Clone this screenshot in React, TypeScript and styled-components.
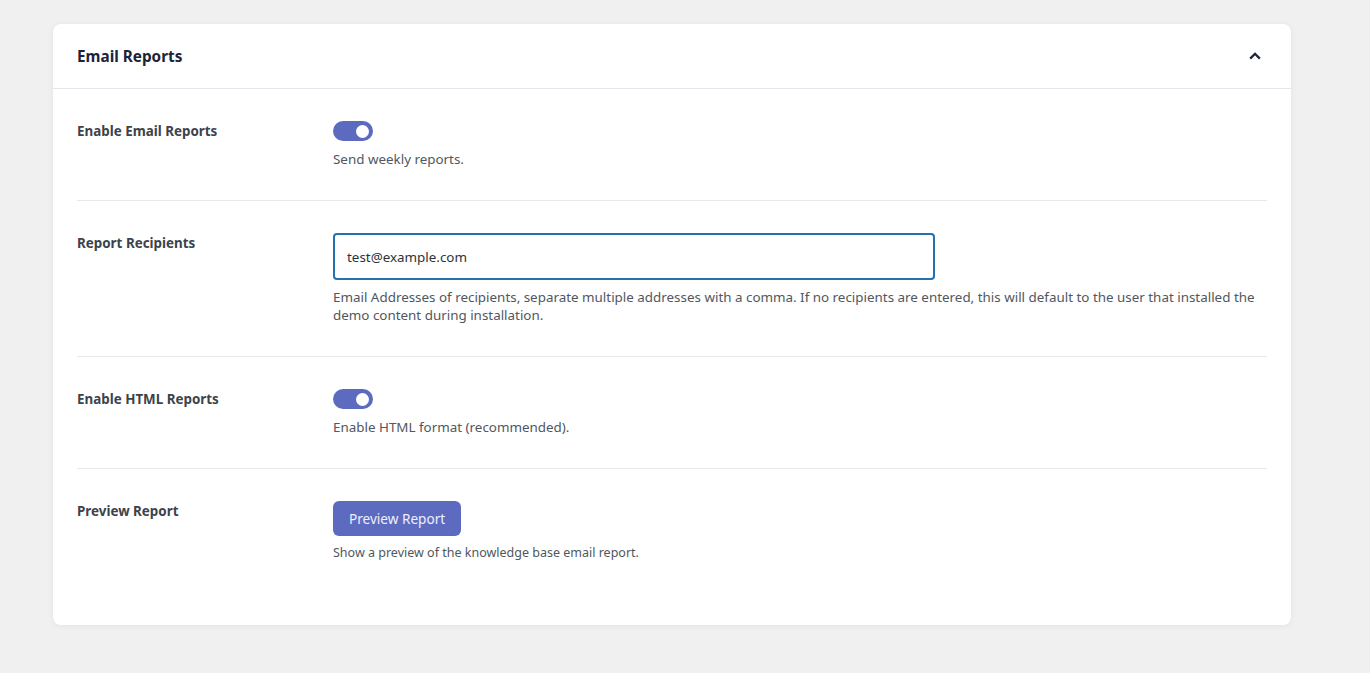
import React, { useState } from "react";
import styled, { createGlobalStyle } from "styled-components";

const GlobalStyle = createGlobalStyle`
  body {
    margin: 0;
    background: #f0f0f0;
    font-family: "Noto Sans", "Open Sans", sans-serif;
    color: #3c434a;
  }
`;

const Page = styled.div`
  padding: 24px 79px 48px 53px;
`;

const Card = styled.section`
  background: #fff;
  border-radius: 8px;
  box-shadow: 0 1px 6px rgba(0, 0, 0, 0.06);
  padding-bottom: 31px;
`;

const Header = styled.header`
  display: flex;
  align-items: center;
  justify-content: space-between;
  height: 64px;
  padding: 0 30px 0 24px;
  border-bottom: 1px solid #e5e7ee;
  h2 {
    margin: 0;
    font-size: 15.3px;
    font-weight: 700;
    color: #1d2338;
  }
  button {
    border: 0;
    background: none;
    padding: 0;
    display: flex;
    cursor: pointer;
  }
`;

const Body = styled.div`
  padding: 0 24px;
`;

const Row = styled.div<{ $last?: boolean }>`
  display: grid;
  grid-template-columns: 256px 1fr;
  padding: 32px 0;
  border-bottom: ${(p) => (p.$last ? "none" : "1px solid #e8e9ee")};
`;

const Label = styled.div`
  font-size: 13.4px;
  font-weight: 700;
  color: #3c434a;
  line-height: 20px;
`;

const Field = styled.div`
  display: flex;
  flex-direction: column;
  align-items: flex-start;
`;

const Desc = styled.p<{ $small?: boolean; $gap?: number }>`
  margin: ${(p) => p.$gap ?? 9}px 0 0;
  font-size: ${(p) => (p.$small ? "12.5px" : "13.4px")};
  line-height: 18px;
  color: #50575e;
`;

const Switch = styled.button<{ $on: boolean }>`
  width: 40px;
  height: 20px;
  border-radius: 10px;
  border: 0;
  cursor: pointer;
  background: ${(p) => (p.$on ? "#5c6bc0" : "#c3c4c7")};
  display: flex;
  align-items: center;
  justify-content: ${(p) => (p.$on ? "flex-end" : "flex-start")};
  padding: 0 4px;
  &::after {
    content: "";
    width: 13px;
    height: 13px;
    border-radius: 50%;
    background: #fff;
  }
`;

const Input = styled.input`
  width: 602px;
  height: 47px;
  box-sizing: border-box;
  border: 2px solid #2271b1;
  border-radius: 4px;
  padding: 0 12px;
  font-family: inherit;
  font-size: 13.4px;
  color: #2c3338;
  outline: none;
`;

const PrimaryButton = styled.button`
  height: 35px;
  padding: 0 16px;
  border: 0;
  border-radius: 6px;
  background: #5c6bc0;
  color: #eef0fa;
  font-family: inherit;
  font-size: 13.6px;
  cursor: pointer;
`;

const Chevron = () => (
  <svg width="12" height="12" viewBox="0 0 12 12" fill="none">
    <path d="M1.2 8.6 L6 3.8 L10.8 8.6" stroke="#1d2338" strokeWidth="2.3" />
  </svg>
);

export default function App() {
  const [reports, setReports] = useState(true);
  const [html, setHtml] = useState(true);
  const [email, setEmail] = useState("test@example.com");

  return (
    <Page>
      <GlobalStyle />
      <Card>
        <Header>
          <h2>Email Reports</h2>
          <button aria-label="Collapse">
            <Chevron />
          </button>
        </Header>
        <Body>
          <Row>
            <Label>Enable Email Reports</Label>
            <Field>
              <Switch $on={reports} onClick={() => setReports(!reports)} />
              <Desc>Send weekly reports.</Desc>
            </Field>
          </Row>
          <Row>
            <Label>Report Recipients</Label>
            <Field>
              <Input value={email} onChange={(e) => setEmail(e.target.value)} />
              <Desc $gap={8}>
                Email Addresses of recipients, separate multiple addresses with a comma. If no recipients are
                entered, this will default to the user that installed the demo content during installation.
              </Desc>
            </Field>
          </Row>
          <Row>
            <Label>Enable HTML Reports</Label>
            <Field>
              <Switch $on={html} onClick={() => setHtml(!html)} />
              <Desc>Enable HTML format (recommended).</Desc>
            </Field>
          </Row>
          <Row $last>
            <Label>Preview Report</Label>
            <Field>
              <PrimaryButton>Preview Report</PrimaryButton>
              <Desc $small $gap={8}>Show a preview of the knowledge base email report.</Desc>
            </Field>
          </Row>
        </Body>
      </Card>
    </Page>
  );
}
